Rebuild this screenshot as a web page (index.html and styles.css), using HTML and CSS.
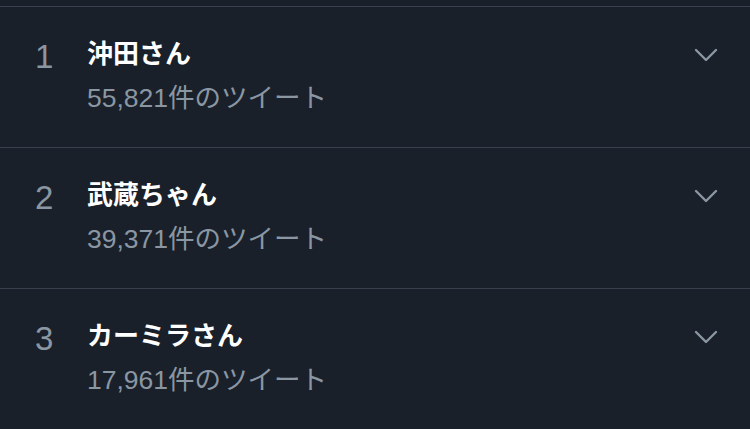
FILE: index.html
```html
<!DOCTYPE html>
<html lang="ja">
<head>
  <meta charset="UTF-8" />
  <meta name="viewport" content="width=device-width, initial-scale=1.0"/>
  <title>トレンド</title>
  <link rel="stylesheet" href="styles.css">
</head>
<body>

  <ul class="trends">
    <li class="trend">
      <span class="rank">1</span>
      <div class="info">
        <p class="name">沖田さん</p>
        <p class="count">55,821件のツイート</p>
      </div>
      <span class="more">
        <svg width="24" height="14" viewBox="0 0 24 14"><polyline points="2,2 12,12 22,2" /></svg>
      </span>
    </li>
    <li class="trend">
      <span class="rank">2</span>
      <div class="info">
        <p class="name">武蔵ちゃん</p>
        <p class="count">39,371件のツイート</p>
      </div>
      <span class="more">
        <svg width="24" height="14" viewBox="0 0 24 14"><polyline points="2,2 12,12 22,2" /></svg>
      </span>
    </li>
    <li class="trend">
      <span class="rank">3</span>
      <div class="info">
        <p class="name">カーミラさん</p>
        <p class="count">17,961件のツイート</p>
      </div>
      <span class="more">
        <svg width="24" height="14" viewBox="0 0 24 14"><polyline points="2,2 12,12 22,2" /></svg>
      </span>
    </li>
  </ul>

</body>
</html>
```

FILE: styles.css
```css
body {
  background-color: #19202a;
  font-family: "Liberation Sans", "Noto Sans CJK JP", sans-serif;
  margin: 0;
  padding: 6px 0 0;
}
.trends {
  list-style: none;
  margin: 0;
  padding: 0;
}
.trend {
  display: flex;
  align-items: flex-start;
  border-top: 1px solid #38414d;
  padding: 30px 32px 32px 0;
}
.rank {
  width: 87px;
  box-sizing: border-box;
  padding: 1px 0 0 35px;
  font-size: 33px;
  line-height: 38px;
  color: #8b96a3;
}
.info {
  flex: 1;
}
.info p {
  margin: 0;
  line-height: 34px;
}
.name {
  color: #ffffff;
  font-size: 26px;
  font-weight: bold;
}
.count {
  margin-top: 10px !important;
  color: #8b96a3;
  font-size: 26.5px;
}
.more {
  padding-top: 11px;
}
.more svg {
  display: block;
  fill: none;
  stroke: #8b96a3;
  stroke-width: 2.4;
  stroke-linecap: round;
  stroke-linejoin: round;
}
```
